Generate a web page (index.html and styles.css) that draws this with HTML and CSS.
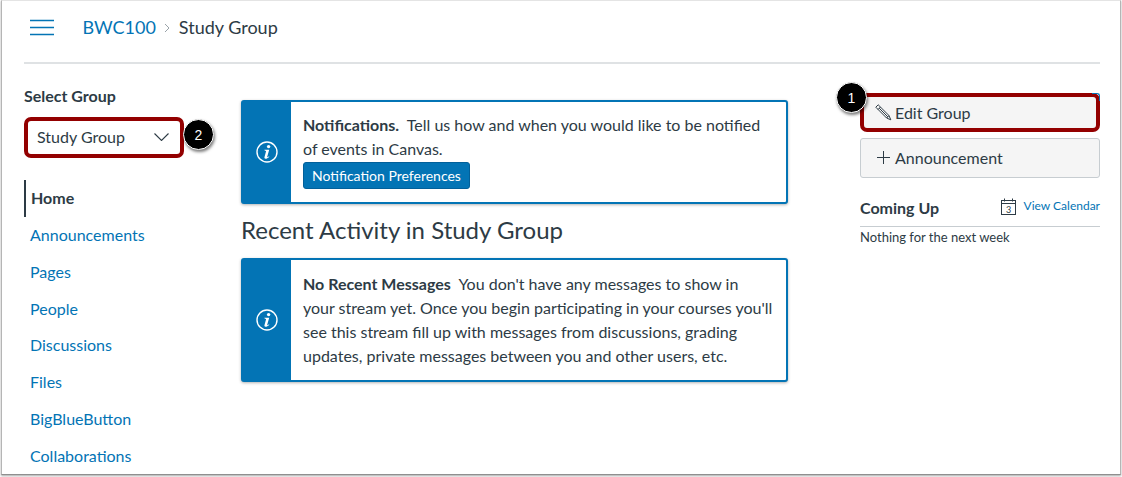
FILE: index.html
```html
<!DOCTYPE html>
<html lang="en">
<head>
  <meta charset="UTF-8">
  <title>Study Group</title>
  <link rel="stylesheet" href="styles.css">
</head>
<body>
  <div class="frame">
    <header class="top-bar">
      <svg class="hamburger" width="26" height="17" viewBox="0 0 26 17">
        <path d="M1 1.500h24M1 8.500h24M1 15.500h24" stroke="#0374b5" stroke-width="1.700" fill="none"/>
      </svg>
      <a class="crumb">BWC100</a>
      <svg class="crumb-sep" width="6" height="10" viewBox="0 0 6 10">
        <path d="M1 1l4 4-4 4" stroke="#9aa3a9" stroke-width="1" fill="none"/>
      </svg>
      <span class="crumb-current">Study Group</span>
    </header>

    <div class="layout">
      <!-- left nav -->
      <aside class="sidebar">
        <h4 class="select-title">Select Group</h4>
        <div class="group-select">
          <span>Study Group</span>
          <svg width="15" height="8" viewBox="0 0 15 8">
            <path d="M.5.500l7 7 7-7" stroke="#2d3b45" stroke-width="1.100" fill="none"/>
          </svg>
          <span class="badge badge-two">2</span>
        </div>
        <nav class="course-nav">
          <a class="active">Home</a>
          <a>Announcements</a>
          <a>Pages</a>
          <a>People</a>
          <a>Discussions</a>
          <a>Files</a>
          <a>BigBlueButton</a>
          <a>Collaborations</a>
        </nav>
      </aside>

      <!-- main column -->
      <main class="content">
        <div class="alert alert-notify">
          <div class="alert-icon">
            <svg width="22" height="22" viewBox="0 0 22 22">
              <circle cx="11" cy="11" r="10" stroke="#fff" stroke-width="1.400" fill="none"/>
              <circle cx="12.600" cy="5.600" r="1.700" fill="#fff"/>
              <path d="M8.300 8.800h4.900l-2 7c-.1.500.2.600 1.800-.6l.3.500c-1.500 1.500-2.600 2-3.700 2-1 0-1.400-.6-1.100-1.600l1.500-5.500c.2-.7-.2-.9-1.100-.9z" fill="#fff"/>
            </svg>
          </div>
          <div class="alert-body">
            <b>Notifications.</b>&nbsp; Tell us how and when you would like to be notified of events in Canvas.
            <a class="btn-primary">Notification Preferences</a>
          </div>
        </div>

        <h2 class="section-title">Recent Activity in Study Group</h2>

        <div class="alert alert-empty">
          <div class="alert-icon">
            <svg width="22" height="22" viewBox="0 0 22 22">
              <circle cx="11" cy="11" r="10" stroke="#fff" stroke-width="1.400" fill="none"/>
              <circle cx="12.600" cy="5.600" r="1.700" fill="#fff"/>
              <path d="M8.300 8.800h4.900l-2 7c-.1.500.2.600 1.800-.6l.3.500c-1.500 1.500-2.600 2-3.700 2-1 0-1.400-.6-1.100-1.600l1.500-5.500c.2-.7-.2-.9-1.100-.9z" fill="#fff"/>
            </svg>
          </div>
          <div class="alert-body">
            <b>No Recent Messages</b>&nbsp; You don't have any messages to show in your stream yet. Once you begin participating in your courses you'll see this stream fill up with messages from discussions, grading updates, private messages between you and other users, etc.
          </div>
        </div>
      </main>

      <!-- right column -->
      <aside class="right-side">
        <a class="side-btn side-btn-marked">
          <svg width="17" height="17" viewBox="0 0 17 17">
            <path d="M.8 3.200L3.200.8 14 11.600l1.800 4.200-4.200-1.800z M3 5.500L5.500 3 M4.200 4.200l8.600 8.600 M11.600 14L14 11.600" stroke="#2d3b45" stroke-width="1" fill="none"/>
          </svg>
          Edit Group
          <span class="badge badge-one">1</span>
        </a>
        <a class="side-btn side-btn-plain">
          <svg width="13" height="13" viewBox="0 0 13 13">
            <path d="M6.500 0v13M0 6.500h13" stroke="#2d3b45" stroke-width="1" fill="none"/>
          </svg>
          Announcement
        </a>
        <div class="coming-head">
          <h4>Coming Up</h4>
          <svg class="cal-icon" width="15" height="17" viewBox="0 0 15 17">
            <rect x="0.500" y="2.500" width="14" height="14" fill="none" stroke="#2d3b45"/>
            <path d="M0.500 5.500h14M3.500 0.500v3M11.500 0.500v3" stroke="#2d3b45" fill="none"/>
            <text x="7.500" y="14.500" class="cal-num">3</text>
          </svg>
          <a>View Calendar</a>
        </div>
        <p class="nothing">Nothing for the next week</p>
      </aside>
    </div>
  </div>
</body>
</html>
```

FILE: styles.css
```css
* {
  box-sizing: border-box;
}

html, body {
  margin: 0;
  height: 100%;
  background: #fff;
  overflow: hidden;
}

body {
  font-family: Lato, "Open Sans", sans-serif;
  color: #2d3b45;
  font-size: 16px;
}

a {
  color: #0374b5;
  text-decoration: none;
}

.frame {
  width: 1120px;
  height: 475px;
  margin-left: 1px;
  border: 1px solid #b5b5b5;
  border-top-color: #e4e4e4;
  border-bottom-color: #8f8f8f;
  box-shadow: 0 1px 2px rgba(0, 0, 0, 0.35);
  overflow: hidden;
  background: #fff;
}

/* header */
.top-bar {
  display: flex;
  align-items: center;
  height: 63px;
  margin: 0 20px 0 22px;
  padding: 0 0 9px 5px;
  border-bottom: 2px solid #dfe2e4;
}

.hamburger {
  margin-right: 27.500px;
}

.crumb {
  font-size: 18px;
}

.crumb-sep {
  margin: 2px 9px 0 8px;
}

.crumb-current {
  font-size: 18px;
}

.layout {
  display: grid;
  grid-template-columns: 217px 547px 312px;
  padding-left: 22px;
}

/* sidebar */
.sidebar {
  padding-top: 22px;
}

.select-title {
  margin: 0;
  font-size: 16px;
  line-height: 19px;
  font-weight: 700;
}

.group-select {
  position: relative;
  display: flex;
  align-items: center;
  justify-content: space-between;
  width: 160px;
  height: 41px;
  margin-top: 12px;
  padding: 0 11px 2px 9px;
  border: 4px solid #930000;
  border-radius: 7px;
  font-size: 16px;
}

.course-nav {
  display: flex;
  flex-direction: column;
  margin-top: 22.200px;
}

.course-nav a {
  display: block;
  height: 36.800px;
  line-height: 36px;
  padding-left: 6px;
  font-size: 16px;
}

.course-nav a.active {
  color: #2d3b45;
  font-weight: 700;
  border-left: 2px solid #2d3b45;
  padding-left: 5px;
}

.badge {
  position: absolute;
  display: flex;
  align-items: center;
  justify-content: center;
  width: 31px;
  height: 31px;
  border-radius: 50%;
  background: #000;
  color: #fff;
  border: 1px solid #fff;
  box-shadow: 1px 2px 3px rgba(0, 0, 0, 0.5);
  font-family: "Liberation Sans", sans-serif;
  font-size: 14px;
  z-index: 1;
}

.badge-two {
  left: 155px;
  top: -2px;
}

.badge-one {
  left: -28px;
  top: -15px;
}

/* main column */
.content {
  padding-top: 36px;
}

.alert {
  display: flex;
  border: 2px solid #0374b5;
  border-radius: 3px;
  box-shadow: 0 1px 3px rgba(0, 0, 0, 0.3);
  background: #fff;
}

.alert-notify {
  height: 104px;
}

.alert-empty {
  height: 124px;
}

.alert-icon {
  flex: none;
  display: flex;
  align-items: center;
  justify-content: center;
  width: 48px;
  background: #0374b5;
}

.alert-body {
  padding: 12px 13px 0 12px;
  font-size: 16px;
  line-height: 24px;
}

.alert-notify .alert-body {
  padding-top: 11px;
}

.btn-primary {
  display: block;
  width: 167px;
  height: 27px;
  margin-top: 1px;
  padding: 0 8px;
  line-height: 26px;
  font-size: 14px;
  white-space: nowrap;
  color: #fff;
  background: #0374b5;
  border: 1px solid #02609a;
  border-radius: 3px;
}

.section-title {
  margin: 0;
  height: 54px;
  line-height: 52px;
  font-size: 24px;
  font-weight: 400;
}

/* right column */
.right-side {
  padding: 29px 0 0 72px;
}

.side-btn {
  position: relative;
  display: flex;
  align-items: center;
  height: 40px;
  color: #2d3b45;
  font-size: 16px;
  background: #f5f5f5;
  border-radius: 3px;
}

.side-btn-marked {
  gap: 3px;
  height: 39px;
  margin-bottom: 6px;
  padding: 0 11px;
  border: 4px solid #930000;
  border-radius: 7px;
}

/* the blue button edge that shows past the red mark */
.side-btn-marked::after {
  content: "";
  position: absolute;
  top: -4px;
  right: -4px;
  width: 7px;
  height: 7px;
  border-top: 1px solid #0374b5;
  border-right: 1px solid #0374b5;
  border-top-right-radius: 3px;
}

.side-btn-plain {
  gap: 5px;
  padding: 0 16px 2px;
  border: 1px solid #c7cdd1;
}

.coming-head {
  display: flex;
  align-items: center;
  height: 29px;
  margin-top: 20px;
  padding-bottom: 8px;
  border-bottom: 1px solid #c7cdd1;
}

.coming-head h4 {
  flex: 1;
  margin: 0 0 2px;
  font-size: 16px;
  font-weight: 700;
  white-space: nowrap;
}

.cal-icon {
  margin-bottom: 4px;
}

.coming-head a {
  margin: 0 0 6px 8px;
  font-size: 12px;
  white-space: nowrap;
}

.cal-num {
  font-family: Lato, sans-serif;
  font-size: 9px;
  text-anchor: middle;
  fill: #2d3b45;
}

.nothing {
  margin: 2px 0 0;
  font-size: 13px;
  line-height: 16px;
}
```
